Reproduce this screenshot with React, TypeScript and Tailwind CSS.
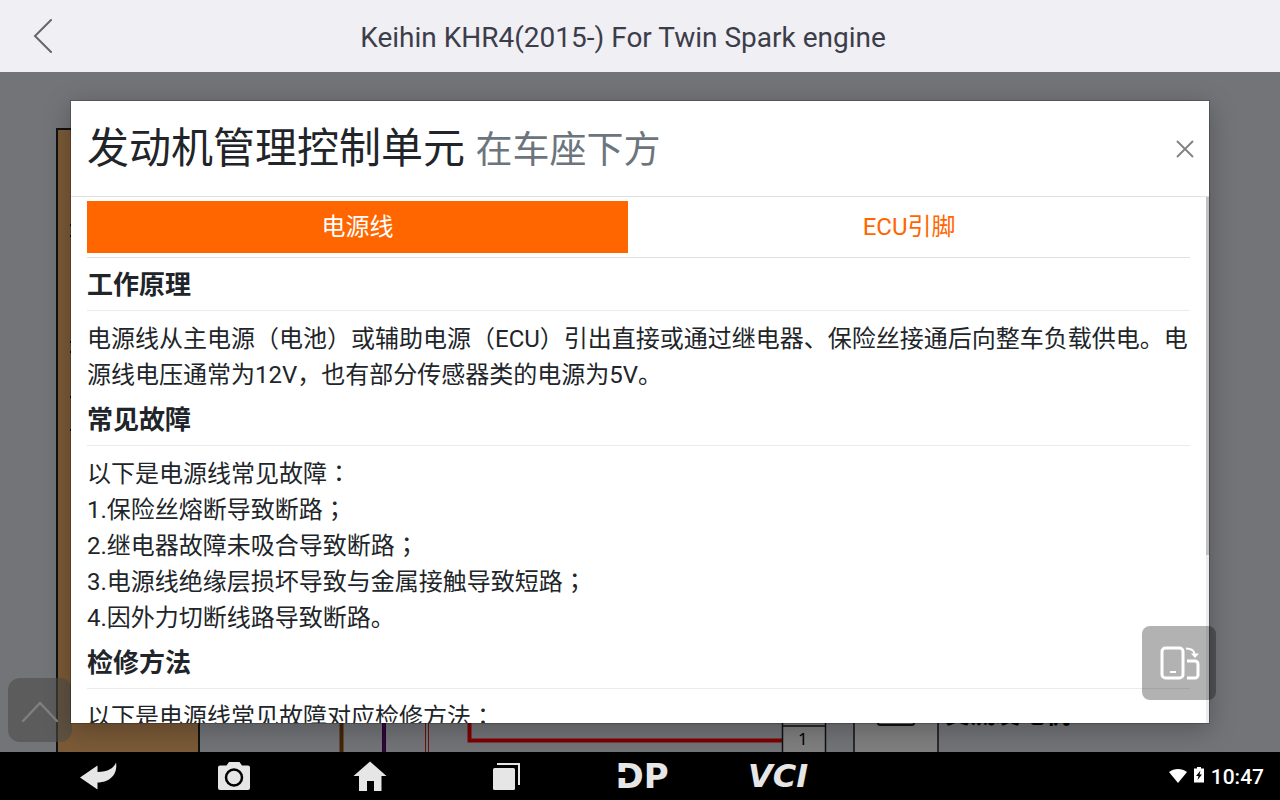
import React, { useState } from 'react';

interface Section {
  title: string;
  lines: string[];
}

const TABS = ['电源线', 'ECU引脚'];

const SECTIONS: Section[] = [
  {
    title: '工作原理',
    lines: [
      '电源线从主电源（电池）或辅助电源（ECU）引出直接或通过继电器、保险丝接通后向整车负载供电。电源线电压通常为12V，也有部分传感器类的电源为5V。',
    ],
  },
  {
    title: '常见故障',
    lines: [
      '以下是电源线常见故障：',
      '1.保险丝熔断导致断路；',
      '2.继电器故障未吸合导致断路；',
      '3.电源线绝缘层损坏导致与金属接触导致短路；',
      '4.因外力切断线路导致断路。',
    ],
  },
  {
    title: '检修方法',
    lines: ['以下是电源线常见故障对应检修方法：'],
  },
];

// colons and semicolons sit in the middle of their cell in the TC face
const Line: React.FC<{ text: string }> = ({ text }) => (
  <p>
    {text.split(/([：；])/).map((part, i) =>
      i % 2 === 1 ? (
        <span key={i} className="font-['Noto_Sans_CJK_TC',sans-serif] leading-none" lang="zh-Hant">
          {part}
        </span>
      ) : (
        part
      )
    )}
  </p>
);

const WiringDiagram = () => (
  <svg className="absolute left-0 top-0 h-full w-full" aria-hidden="true">
    <rect x="57" y="57" width="142" height="640" fill="#f4b46e" stroke="#222" strokeWidth="2" />
    <path d="M70 153h2M70 164h2M70 270h2M70 280h2M70 325h2M70 358h2" stroke="#000" strokeWidth="2" />
    <path d="M341.500 600v90" stroke="#8a4a08" strokeWidth="4" />
    <path d="M384 600v90" stroke="#1010c0" strokeWidth="4" />
    <path d="M384 600v90" stroke="#a00020" strokeWidth="2" />
    <path d="M425.500 600v90M428.500 600v90" stroke="#d82020" strokeWidth="1" />
    <path d="M469.500 600v68.500H782" stroke="#ff0000" strokeWidth="4" fill="none" />
    <rect x="782.500" y="610" width="43" height="80" fill="#fff" stroke="#222" strokeWidth="1.500" />
    <path d="M782 654h44" stroke="#222" strokeWidth="1.500" />
    <text x="798" y="673" fontSize="17" className="font-['Noto_Sans',sans-serif]">1</text>
    <rect x="854" y="600" width="84" height="90" fill="#fff" stroke="#222" strokeWidth="1.500" />
    <rect x="878" y="620" width="36" height="33" rx="2" fill="none" stroke="#222" strokeWidth="2" />
    <text x="945" y="651" fontSize="25" fontWeight="700" className="font-['Noto_Sans_CJK_SC',sans-serif]">
      交流发电机
    </text>
  </svg>
);

const NavButton: React.FC<{ label: string; children: React.ReactNode }> = ({ label, children }) => (
  <button type="button" aria-label={label} className="flex h-12 w-[136px] items-center justify-center text-[#e6e6e6]">
    {children}
  </button>
);

const SystemBar = () => (
  <footer className="flex h-12 shrink-0 items-center justify-between bg-black pl-[30px] pr-4">
    <nav className="flex">
      <NavButton label="返回">
        <svg width="40" height="32" viewBox="0 0 40 32" fill="currentColor">
          <path d="M2 17.500 19.500 5.500V12C30 12 36 8 38 2.500 40 14 32 22.500 19.500 22.500V29.500Z" />
        </svg>
      </NavButton>
      <NavButton label="截屏">
        <svg width="32" height="32" viewBox="0 0 32 32" fill="currentColor">
          <path d="M2 5.500H8.500L11 2H21.500L24 5.500H30a2 2 0 0 1 2 2V28a2 2 0 0 1-2 2H2a2 2 0 0 1-2-2V7.500a2 2 0 0 1 2-2Z" />
          <circle cx="16" cy="17.500" r="8" fill="none" stroke="#000" strokeWidth="2.500" />
        </svg>
      </NavButton>
      <NavButton label="主页">
        <svg width="34" height="32" viewBox="0 0 34 32" fill="currentColor">
          <path d="M17 1.500 33.500 16H28.500V31H21V21H14V31H6V16H.5Z" />
        </svg>
      </NavButton>
      <NavButton label="最近任务">
        <svg width="28" height="32" viewBox="0 0 28 32" fill="currentColor">
          <rect x="1" y="8" width="22" height="22" rx="1.500" />
          <path d="M5 4H27V25" fill="none" stroke="currentColor" strokeWidth="2" />
        </svg>
      </NavButton>
      <NavButton label="DP">
        <span className="relative font-['DejaVu_Sans',sans-serif] text-[34px] font-bold leading-none">
          DP
          <span className="absolute left-0 top-[13px] h-1.5 w-4 bg-black" />
        </span>
      </NavButton>
      <NavButton label="VCI">
        <span className="font-['DejaVu_Sans',sans-serif] text-[32px] font-bold italic leading-none">VCI</span>
      </NavButton>
    </nav>
    <div className="flex items-center text-white">
      <svg className="mr-[7px]" width="18" height="16" viewBox="0 0 18 16" fill="currentColor" aria-hidden="true">
        <path d="M0 4C5 0 13 0 18 4L9 15Z" />
      </svg>
      <svg className="mr-[7px]" width="10" height="18" viewBox="0 0 10 18" fill="currentColor" aria-hidden="true">
        <path d="M3 0H7V1.500H10V15.500H0V1.500H3Z" />
        <path d="M6.500 3.500 2 9H4.500L3.500 13 8 7.500H5.500Z" fill="#000" />
      </svg>
      <time className="pt-0.5 text-[21px] font-medium leading-none">10:47</time>
    </div>
  </footer>
);

export default function App() {
  const [tab, setTab] = useState(0);

  return (
    <div className="flex h-screen flex-col overflow-hidden font-[Roboto,'Noto_Sans_CJK_SC',sans-serif]" lang="zh-CN">
      <header className="flex h-[72px] shrink-0 items-center bg-[#efeff4] pr-[120px]">
        <button type="button" aria-label="返回" className="flex h-full w-[86px] items-center justify-center">
          <svg width="20" height="34" viewBox="0 0 20 34" fill="none" stroke="#666" strokeWidth="2" strokeLinecap="round">
            <path d="M18 1 2 17 18 33" />
          </svg>
        </button>
        <h1 className="flex-1 pt-1 text-center text-[28px] leading-10 text-[#3d3d4a]">
          Keihin KHR4(2015-) For Twin Spark engine
        </h1>
      </header>

      <main className="relative flex min-h-0 flex-1 overflow-hidden bg-[#e6e8f0]">
        <WiringDiagram />
        <button
          type="button"
          aria-label="回到顶部"
          className="absolute bottom-2.5 left-2 flex size-16 items-center justify-center rounded-xl bg-[#969a90]/60 pt-1"
        >
          <svg width="38" height="22" viewBox="0 0 38 22" fill="none" stroke="#fff" strokeWidth="2.400" strokeLinecap="round">
            <path d="M2 20 19 2 36 20" />
          </svg>
        </button>

        <div className="relative flex min-w-0 flex-1 bg-black/50 px-[70px] py-7">
          <div
            role="dialog"
            aria-labelledby="unit-title"
            className="flex min-w-0 flex-1 flex-col border border-black/20 bg-white bg-clip-padding text-[#212529] shadow-[0_6px_24px_rgba(0,0,0,0.25)]"
          >
            <div className="flex h-24 shrink-0 items-center justify-between border-b border-[#dee2e6] pl-4 pr-3.5">
              <h2 id="unit-title" className="text-[42px] leading-none">
                发动机管理控制单元 <small className="text-[37px] text-[#6c757d]">在车座下方</small>
              </h2>
              <button type="button" aria-label="关闭">
                <svg width="20" height="20" viewBox="0 0 20 20" stroke="#808080" strokeWidth="1.800">
                  <path d="M2 2 18 18M18 2 2 18" />
                </svg>
              </button>
            </div>

            <div className="flex min-h-0 flex-1">
              <div className="min-w-0 flex-1 overflow-y-auto px-4 pb-9 [scrollbar-width:none]">
                <div role="tablist" className="flex border-b border-[#dee2e6] py-1">
                  {TABS.map((name, i) => (
                    <button
                      key={name}
                      type="button"
                      role="tab"
                      aria-selected={tab === i}
                      onClick={() => setTab(i)}
                      className={`flex-auto px-4 py-2 text-2xl leading-9 ${
                        tab === i ? 'bg-[#ff6600] text-white' : 'text-[#ff6600]'
                      }`}
                    >
                      {name}
                    </button>
                  ))}
                </div>
                {SECTIONS.map((section) => (
                  <section key={section.title}>
                    <h3 className="border-b border-[#ebebeb] pb-[5px] pt-2 text-[26px] font-bold leading-[39px]">
                      {section.title}
                    </h3>
                    <div className="pt-2.5 text-2xl leading-9">
                      {section.lines.map((line) => (
                        <Line key={line} text={line} />
                      ))}
                    </div>
                  </section>
                ))}
              </div>
              <div className="w-[3px] bg-[#e9ecef]">
                <div className="h-[68%] bg-[#c1c1c1]" />
              </div>
            </div>
          </div>
        </div>

        <button
          type="button"
          aria-label="旋转屏幕"
          className="absolute bottom-[52px] right-16 flex size-[74px] items-center justify-center rounded-lg bg-black/30 pl-0.5"
        >
          <svg width="40" height="34" viewBox="0 0 40 34" fill="none" stroke="#fff" strokeWidth="3">
            <rect x="2" y="2" width="21" height="30" rx="3.500" />
            <path d="M10 26h6" strokeWidth="2" />
            <path d="M27 15H35a3 3 0 0 1 3 3V29a3 3 0 0 1-3 3H27" />
            <path d="M26 2.500C31 2.500 34 4.500 34.500 8" strokeWidth="2" />
            <path d="M31 7.500H39L35 12Z" fill="#fff" stroke="none" />
          </svg>
        </button>
      </main>

      <SystemBar />
    </div>
  );
}
